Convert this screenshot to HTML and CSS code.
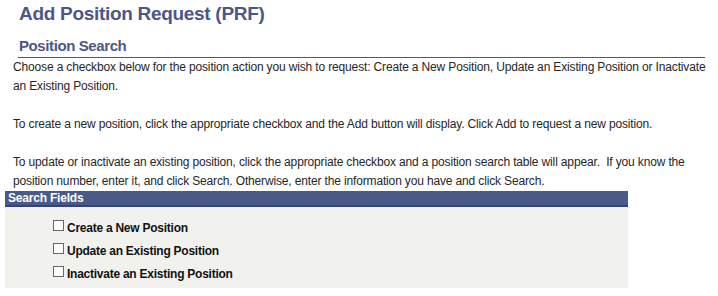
FILE: index.html
```html
<!DOCTYPE html>
<html lang="en">

<head>
    <meta charset="UTF-8">
    <meta name="viewport" content="width=device-width, initial-scale=1.0">
    <title>Add Position Request (PRF)</title>
    <link rel="stylesheet" href="styles.css">
</head>

<body>
    <h1 class="page-title">Add Position Request (PRF)</h1>
    <h2 class="sub-title">Position Search</h2>
    <div class="instructions">
        <p>Choose a checkbox below for the position action you wish to request: Create a New Position, Update an Existing Position or Inactivate an Existing Position.</p>
        <p>To create a new position, click the appropriate checkbox and the Add button will display. Click Add to request a new position.</p>
        <p>To update or inactivate an existing position, click the appropriate checkbox and a position search table will appear.&nbsp; If you know the position number, enter it, and click Search. Otherwise, enter the information you have and click Search.</p>
    </div>
    <section class="search-fields">
        <div class="bar">Search Fields</div>
        <div class="panel">
            <label class="choice"><span class="box"></span>Create a New Position</label>
            <label class="choice"><span class="box"></span>Update an Existing Position</label>
            <label class="choice"><span class="box"></span>Inactivate an Existing Position</label>
        </div>
    </section>
</body>

</html>
```

FILE: styles.css
```css
body {
    margin: 0;
    font-family: "Liberation Sans", Arial, sans-serif;
    background-color: #fff;
    color: #262626;
}

.page-title {
    margin: 0;
    padding: 2px 0 0 19px;
    font-size: 19px;
    letter-spacing: -0.3px;
    line-height: 23px;
    color: #4b5887;
}

.sub-title {
    margin: 12px 13px 0 18px;
    padding: 0 0 2px 1px;
    font-size: 15px;
    letter-spacing: -0.4px;
    line-height: 18px;
    color: #4b5887;
    border-bottom: 1px solid #4b5887;
}

.instructions {
    padding: 0 8px 0 13px;
    font-size: 12px;
    letter-spacing: -0.15px;
    line-height: 19px;
}

.instructions p {
    margin: 0 0 19px 0;
}

.instructions p:last-child {
    margin-bottom: 0;
}

.search-fields {
    width: 623px;
    margin: 0 0 0 5px;
}

.bar {
    background-color: #4a5a88;
    border-bottom: 2px solid #34446f;
    color: #fff;
    font-size: 12px;
    font-weight: bold;
    letter-spacing: -0.2px;
    line-height: 14px;
    padding: 0 3px;
}

.panel {
    background-color: #f1f2ee;
    padding: 13px 0 6px 48px;
    display: flex;
    flex-direction: column;
    gap: 7px;
}

.choice {
    display: flex;
    align-items: center;
    font-size: 12px;
    font-weight: bold;
    letter-spacing: -0.25px;
    line-height: 16px;
    color: #111;
}

.box {
    width: 9px;
    height: 9px;
    border: 1px solid #666;
    background-color: #fff;
    margin-right: 3px;
    position: relative;
    top: -3px;
}
```
